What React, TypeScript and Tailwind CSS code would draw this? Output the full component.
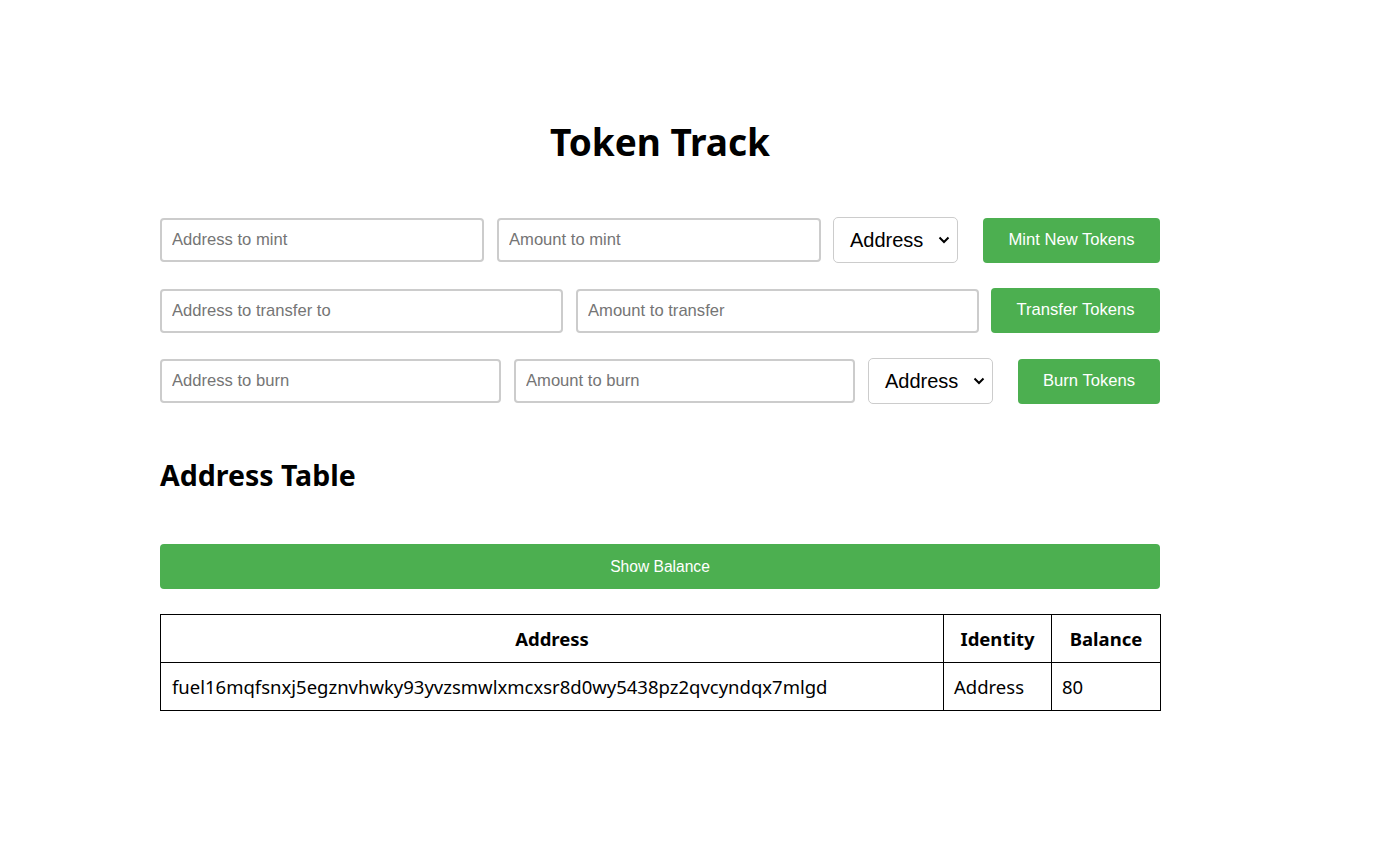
import React from "react";

const inputCls =
  "h-[44px] border-2 border-[#cccccc] rounded-[4px] px-[10px] text-[16.6px] text-black placeholder:text-[#757575] outline-none bg-white";
const btnCls =
  "h-[45px] bg-[#4caf50] text-white rounded-[4px] flex items-center justify-center";

function Select({ className = "" }: { className?: string }) {
  return (
    <div className={"relative h-[46px] w-[125px] " + className}>
      <div className="h-full w-full border border-[#cccccc] rounded-[5px] bg-white flex items-center pl-[16px] text-[20px] text-black">
        Address
      </div>
      <svg
        className="absolute right-[8px] top-1/2 -translate-y-1/2"
        width="12"
        height="8"
        viewBox="0 0 12 8"
        fill="none"
      >
        <path d="M1.5 1.5 L6 6 L10.5 1.5" stroke="#000" strokeWidth="2" />
      </svg>
    </div>
  );
}

export default function App() {
  return (
    <div
      className="min-h-[852px] bg-white text-black"
      style={{ fontFamily: '"Liberation Sans", Arial, sans-serif' }}
    >
      <div className="ml-[160px] w-[1000px] pt-[118px]">
        <h1
          className="text-center text-[37px] leading-[48px] font-bold"
          style={{ fontFamily: '"Noto Sans", sans-serif' }}
        >
          Token Track
        </h1>

        <div className="mt-[51px] flex items-center">
          <input className={inputCls + " w-[324px]"} placeholder="Address to mint" />
          <input className={inputCls + " w-[324px] ml-[13px]"} placeholder="Amount to mint" />
          <Select className="ml-[12px]" />
          <button className={btnCls + " w-[177px] ml-[25px] text-[16.6px]"}>Mint New Tokens</button>
        </div>

        <div className="mt-[25px] flex items-center">
          <input className={inputCls + " w-[403px]"} placeholder="Address to transfer to" />
          <input className={inputCls + " w-[403px] ml-[13px]"} placeholder="Amount to transfer" />
          <button className={btnCls + " w-[169px] ml-[12px] text-[16.6px]"}>Transfer Tokens</button>
        </div>

        <div className="mt-[25px] flex items-center">
          <input className={inputCls + " w-[341px]"} placeholder="Address to burn" />
          <input className={inputCls + " w-[341px] ml-[13px]"} placeholder="Amount to burn" />
          <Select className="ml-[13px]" />
          <button className={btnCls + " w-[142px] ml-[25px] text-[16.6px]"}>Burn Tokens</button>
        </div>

        <h2
          className="mt-[54px] text-[28.5px] leading-[34px] font-bold"
          style={{ fontFamily: '"Noto Sans", sans-serif' }}
        >
          Address Table
        </h2>

        <button className={btnCls + " w-full mt-[52px] text-[15.6px]"}>Show Balance</button>

        <table
          className="mt-[25px] w-[1000px] border-collapse table-fixed text-[18.5px]"
          style={{ fontFamily: '"Noto Sans", sans-serif' }}
        >
          <colgroup>
            <col className="w-[783px]" />
            <col className="w-[108px]" />
            <col className="w-[109px]" />
          </colgroup>
          <thead>
            <tr className="h-[48px]">
              <th className="border border-black px-[10px] font-bold text-center">Address</th>
              <th className="border border-black px-[8px] font-bold text-center">Identity</th>
              <th className="border border-black px-[8px] font-bold text-center">Balance</th>
            </tr>
          </thead>
          <tbody>
            <tr className="h-[48px]">
              <td className="border border-black px-[11px] text-left whitespace-nowrap">
                fuel16mqfsnxj5egznvhwky93yvzsmwlxmcxsr8d0wy5438pz2qvcyndqx7mlgd
              </td>
              <td className="border border-black px-[10px] text-left">Address</td>
              <td className="border border-black px-[10px] text-left">80</td>
            </tr>
          </tbody>
        </table>
      </div>
    </div>
  );
}
